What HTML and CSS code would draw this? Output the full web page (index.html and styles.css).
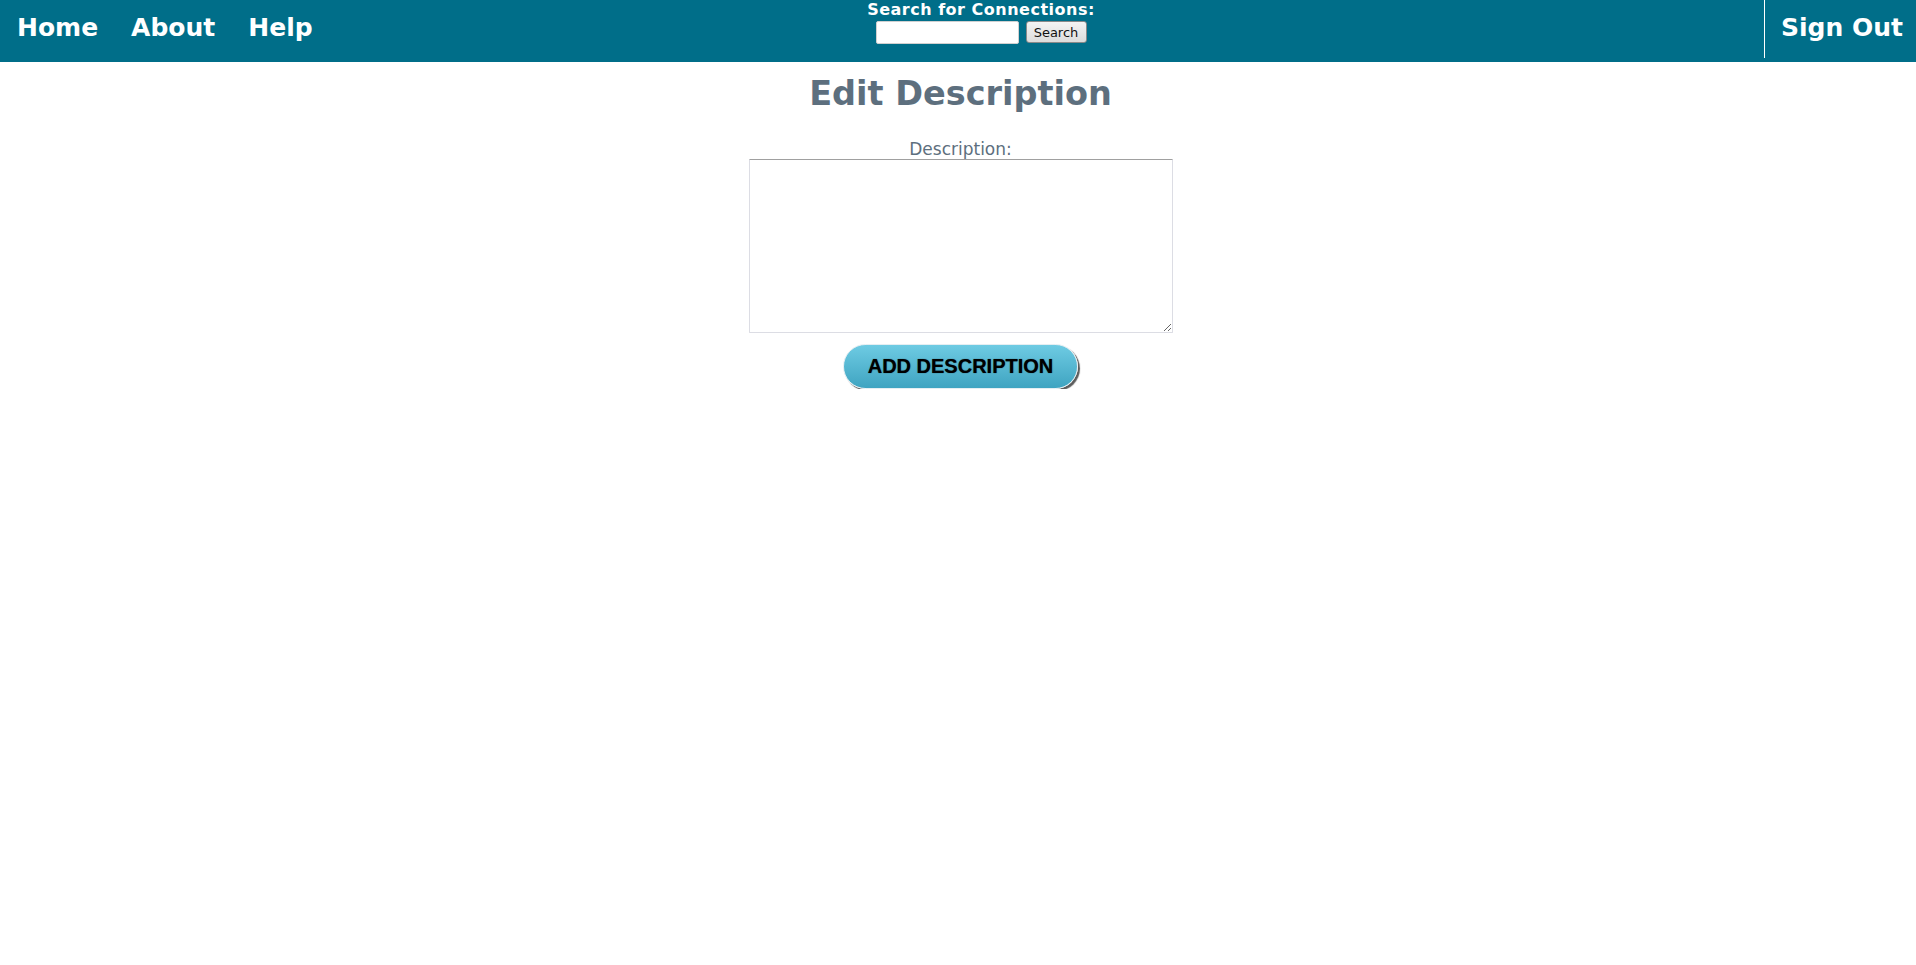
FILE: index.html
```html
<!DOCTYPE html>
<html>
<head>
<meta charset="utf-8">
<title>Edit Description</title>
<link rel="stylesheet" href="styles.css">
</head>
<body>
<header class="topbar">
  <nav class="nav-left">
    <a class="nav-link" href="#">Home</a>
    <a class="nav-link" href="#">About</a>
    <a class="nav-link" href="#">Help</a>
  </nav>
  <form class="search">
    <div class="search-label">Search for Connections:</div>
    <div class="search-row">
      <input class="search-input" type="text">
      <button class="search-btn" type="button">Search</button>
    </div>
  </form>
  <div class="nav-right">
    <a class="nav-link signout" href="#">Sign Out</a>
  </div>
</header>
<main class="content">
  <h1 class="title">Edit Description</h1>
  <label class="field-label">Description:</label>
  <textarea class="desc"></textarea>
  <button class="add-btn" type="button">ADD DESCRIPTION</button>
</main>
</body>
</html>
```
FILE: styles.css
```css
html, body {
  margin: 0;
  padding: 0;
  background: #ffffff;
  font-family: "DejaVu Sans", Verdana, sans-serif;
}

.topbar {
  display: flex;
  align-items: flex-start;
  height: 62px;
  background: #006e89;
}

.nav-left {
  flex: 1 1 0;
  display: flex;
  gap: 33px;
  padding: 13px 0 0 17px;
}

.nav-link {
  color: #ffffff;
  text-decoration: none;
  font-weight: bold;
  font-size: 25px;
  line-height: 30px;
}

.search {
  margin: 0 0 0 29px;
  display: flex;
  flex-direction: column;
  align-items: center;
}

.search-label {
  color: #ffffff;
  font-weight: bold;
  font-size: 16px;
  letter-spacing: 0.5px;
  line-height: 19px;
}

.search-row {
  display: flex;
  align-items: flex-start;
  gap: 7px;
  margin-top: 2px;
}

.search-input {
  box-sizing: border-box;
  width: 143px;
  height: 23px;
  margin: 0;
  border: 1px solid #d0d0d0;
  border-radius: 2px;
  background: #ffffff;
}

.search-btn {
  box-sizing: border-box;
  width: 61px;
  height: 22px;
  margin: 0;
  padding: 0;
  font-family: "DejaVu Sans", Verdana, sans-serif;
  font-size: 13px;
  color: #111;
  background: linear-gradient(#f4f4f4, #dcdcdc);
  border: 1px solid #8a8a8a;
  border-radius: 3px;
}

.nav-right {
  flex: 1 1 0;
  display: flex;
  justify-content: flex-end;
}

.signout {
  border-left: 1px solid #ffffff;
  height: 45px;
  padding: 13px 13px 0 16px;
}

.content {
  display: flex;
  flex-direction: column;
  align-items: center;
  padding-left: 5px;
}

.title {
  margin: 13px 0 0 0;
  font-size: 33.5px;
  font-weight: bold;
  color: #5d6f7e;
  line-height: 38px;
}

.field-label {
  margin-top: 26px;
  font-size: 17px;
  line-height: 20px;
  color: #5d6f7e;
}

.desc {
  box-sizing: border-box;
  width: 424px;
  height: 174px;
  margin: 0;
  border: 1px solid #dcdde4;
  border-top-color: #a0a0a0;
  border-radius: 1px;
  padding: 2px;
}

.add-btn {
  box-sizing: border-box;
  margin-top: 11px;
  width: 235px;
  height: 45px;
  border-radius: 23px;
  border: 1px solid #e4eef2;
  background: linear-gradient(#6ecbe3, #3fa4c1);
  box-shadow: 2px 2px 1px #5c5c5c;
  font-family: "Liberation Sans", Arial, sans-serif;
  font-weight: bold;
  font-size: 20px;
  color: #000000;
  text-shadow: 0 0 1px #1a3a44;
  padding: 0;
}
```
